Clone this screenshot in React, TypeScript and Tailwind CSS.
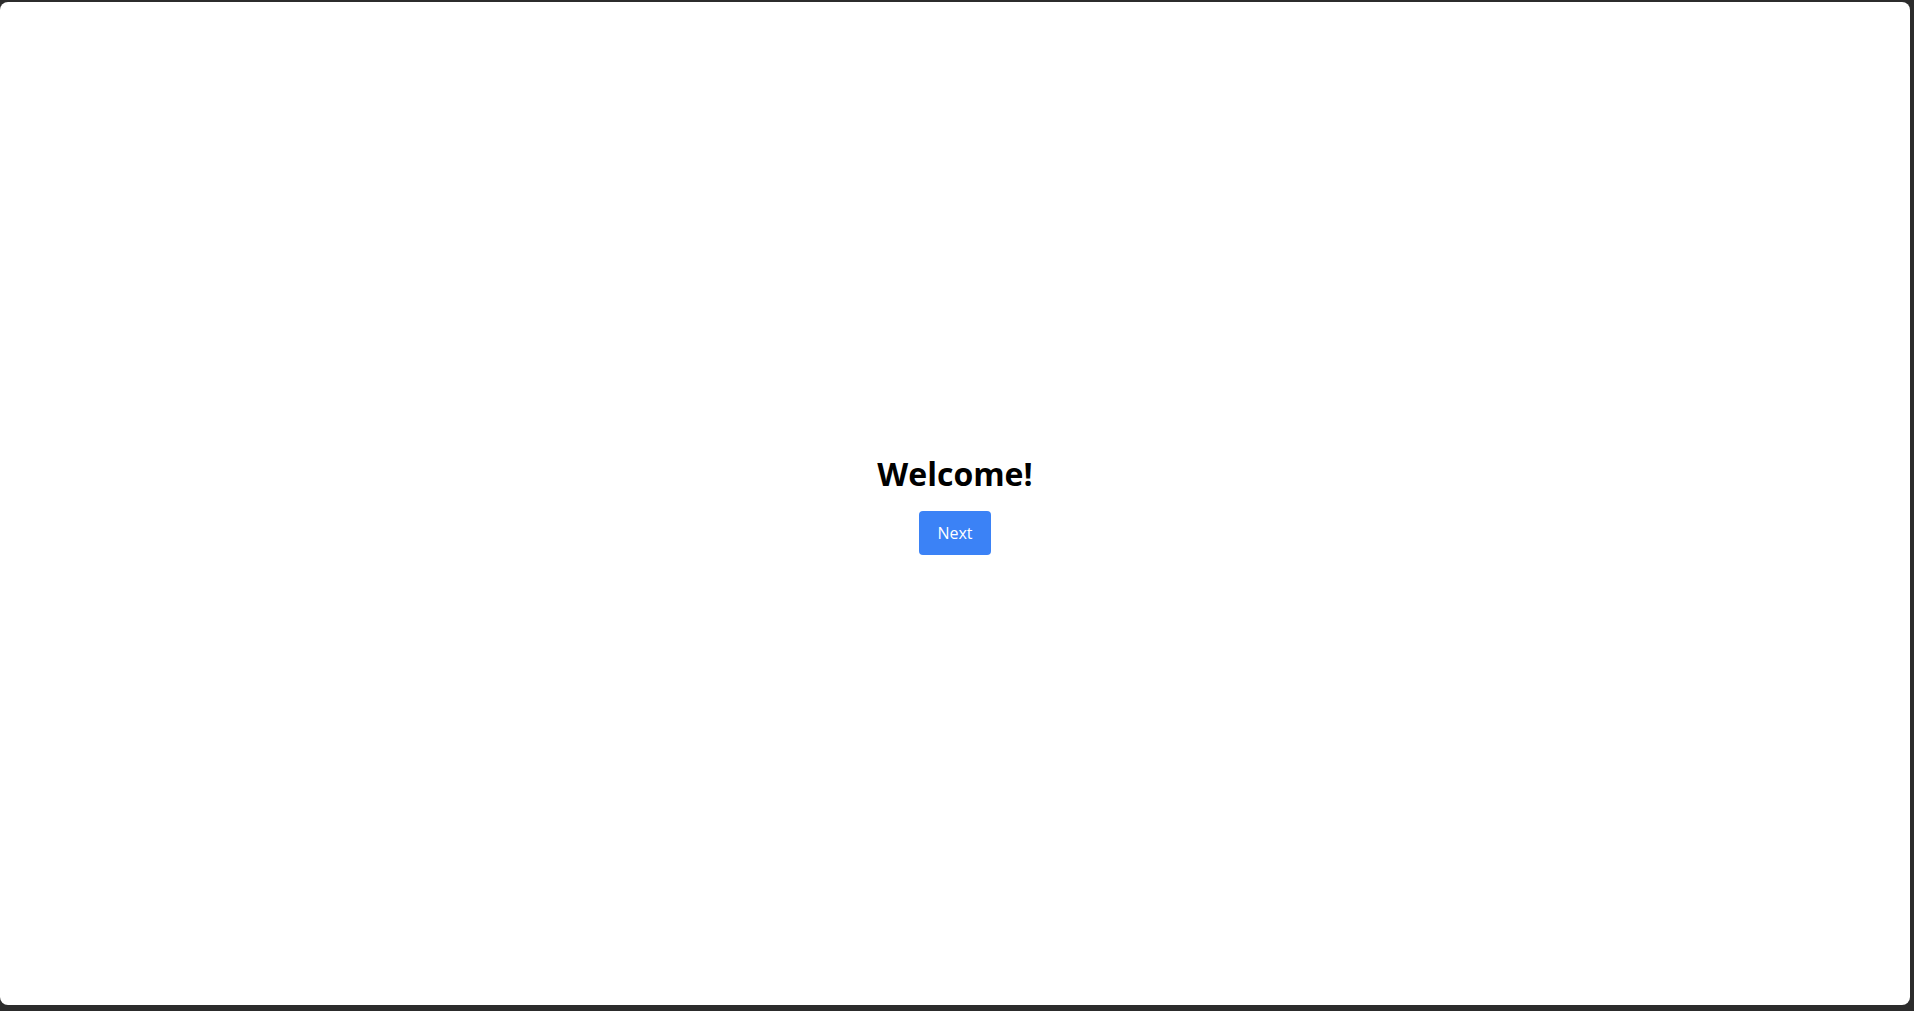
export default function App() {
  return (
    <div className="h-[1011px] w-[1914px] overflow-hidden bg-[#2c2c2c] pt-[2px] pr-[4px] pb-[6px]">
      <div className="flex h-full w-full flex-col items-center justify-center rounded-lg bg-white pt-[1px] font-['Open_Sans',sans-serif]">
        <h1 className="text-[32px] font-bold leading-[40px] text-black">Welcome!</h1>
        <button className="mt-[17px] rounded bg-[#3b82f6] px-[18px] py-[10px] text-base leading-6 text-white">
          Next
        </button>
      </div>
    </div>
  );
}
